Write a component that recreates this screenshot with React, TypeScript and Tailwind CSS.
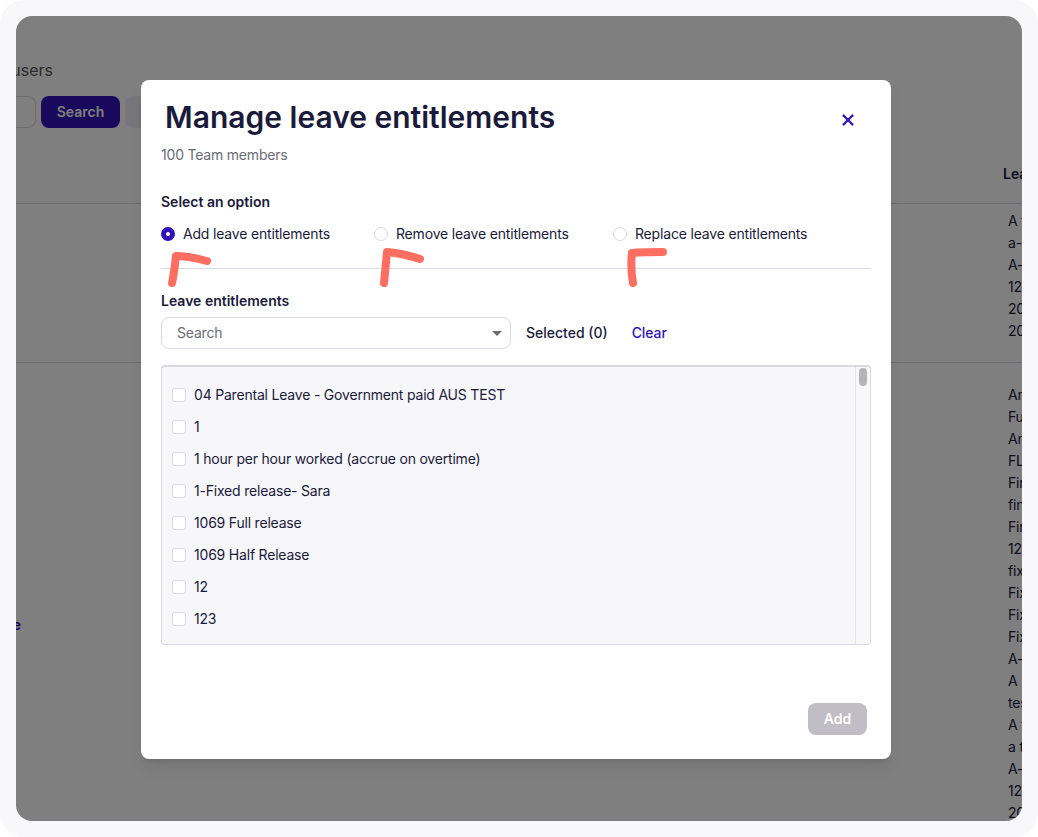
import { X } from 'lucide-react';

const options = ['Add leave entitlements', 'Remove leave entitlements', 'Replace leave entitlements'];

const entitlements = [
  '04 Parental Leave - Government paid AUS TEST',
  '1',
  '1 hour per hour worked (accrue on overtime)',
  '1-Fixed release- Sara',
  '1069 Full release',
  '1069 Half Release',
  '12',
  '123',
];

const firstRow = ['A test', 'a-1 leave', 'A-leave', '12 days', '2022', '2023'];
const secondRow = [
  'Annual', 'Full', 'Annual', 'FLT', 'First', 'final', 'First', '12 days', 'fixed', 'Fixed', 'Fixed', 'Fixed',
  'A-leave', 'A leave', 'test', 'A test', 'a test', 'A-leave', '12 days', '2022',
];

function Background() {
  return (
    <div className="flex flex-col text-sm text-[#1a1a3a]">
      <div className="mt-[42px] flex h-6 w-[37px] justify-end whitespace-nowrap text-base leading-6 text-[#555]">
        Search users
      </div>
      <div className="mt-[14px] flex h-8 gap-[5px]">
        <div className="w-5 rounded-r-lg border border-l-0 border-[#d9d9e3] bg-white" />
        <div className="flex w-[79px] items-center justify-center rounded-lg bg-[#3212b8] font-semibold text-white">
          Search
        </div>
        <div className="w-[120px] rounded-lg bg-[#eeeef6]" />
      </div>
      <div className="flex h-[76px] items-end border-b border-[#d9d9e3] pb-[19px] pl-[987px] font-semibold whitespace-nowrap">
        Leave entitlements
      </div>
      <div className="flex h-[159px] border-b border-[#d9d9e3] pt-[6px]">
        <div className="ml-[992px] flex flex-col tracking-[-0.2px] whitespace-nowrap leading-[22px]">
          {firstRow.map((label) => (
            <div key={label}>{label}</div>
          ))}
        </div>
      </div>
      <div className="flex">
        <div className="flex w-[5px] justify-end pt-[252px] font-semibold whitespace-nowrap text-[#3212b8]">
          Manage
        </div>
        <div className="ml-[987px] flex flex-col tracking-[-0.2px] whitespace-nowrap pt-[21px] leading-[22px]">
          {secondRow.map((label, i) => (
            <div key={i}>{label}</div>
          ))}
        </div>
      </div>
    </div>
  );
}

function Modal() {
  return (
    <div className="absolute top-16 left-[125px] flex h-[679px] w-[750px] flex-col rounded-lg bg-white px-5 text-sm text-[#1a1a3a] shadow-lg">
      <div className="mt-[17px] flex items-center justify-between pr-[14px] pl-1">
        <h1 className="text-3xl leading-10 font-semibold">Manage leave entitlements</h1>
        <X className="mt-[6px] h-[18px] w-[18px] text-[#3212b8]" strokeWidth={3} />
      </div>
      <p className="mt-[8px] leading-5 tracking-[-0.2px] text-[#6b6b76]">100 Team members</p>

      <p className="mt-[27px] leading-5 font-semibold">Select an option</p>
      <div className="mt-[12px] flex h-5 items-center tracking-[-0.18px]">
        {options.map((label, i) => (
          <label
            key={label}
            className={
              i === 0
                ? 'flex w-[213px] items-center gap-2'
                : i === 1
                  ? 'flex w-[239px] items-center gap-2'
                  : 'flex items-center gap-2'
            }
          >
            {i === 0 ? (
              <span className="h-[14px] w-[14px] rounded-full border-[5px] border-[#3212b8] bg-white" />
            ) : (
              <span className="h-[14px] w-[14px] rounded-full border border-[#d9d9e3] bg-white" />
            )}
            <span>{label}</span>
          </label>
        ))}
      </div>
      <div className="mt-[24px] border-t border-[#d9d9e3]" />

      <p className="mt-[22px] leading-5 font-semibold">Leave entitlements</p>
      <div className="mt-[6px] flex items-center">
        <div className="flex h-8 w-[350px] items-center justify-between rounded-lg border border-[#d9d9e3] pr-[8px] pl-[15px] tracking-[-0.2px] text-[#6b6b76]">
          <span>Search</span>
          <span className="h-0 w-0 border-x-[5px] border-t-[5px] border-x-transparent border-t-[#6b6b76]" />
        </div>
        <span className="ml-[15px] font-medium">Selected (0)</span>
        <span className="ml-6 font-medium tracking-[-0.1px] text-[#3212b8]">Clear</span>
      </div>

      <div className="relative mt-4 h-[280px] overflow-hidden rounded border border-t-2 border-[#d9d9e3] bg-[#f7f7fa]">
        <div className="flex flex-col pt-[12px] pl-[10px] tracking-[-0.2px]">
          {entitlements.map((label) => (
            <div key={label} className="flex h-8 items-center gap-2">
              <span className="h-[14px] w-[14px] rounded-[3px] border border-[#d9d9e3] bg-white" />
              <span>{label}</span>
            </div>
          ))}
        </div>
        <div className="absolute top-0 right-0 bottom-0 w-[15px] border-l border-[#e6e6e6] bg-[#f8f8f8] pt-px pl-[3px]">
          <div className="h-[18px] w-2 rounded bg-[#b5b5b5]" />
        </div>
      </div>

      <div className="mt-[58px] flex justify-end pr-1">
        <button className="h-8 w-[59px] rounded-lg bg-[#c0bdc4] font-semibold text-white">Add</button>
      </div>
    </div>
  );
}

export default function App() {
  return (
    <div className="relative h-[837px] w-full bg-white font-['Inter',sans-serif]">
      <div className="h-full rounded-3xl bg-[#f8f8fb] p-4">
        <div className="relative h-[805px] overflow-hidden rounded-2xl bg-white">
          <Background />
          <div className="absolute inset-0 bg-black/50" />
          <Modal />
        </div>
      </div>
      <svg className="pointer-events-none absolute inset-0" width="1038" height="837" fill="none" stroke="#ff6f61" strokeWidth="8" strokeLinecap="round" strokeLinejoin="round">
        <path d="M172 283C174 274 175 265 176 256C186 256 196 258 207 261" />
        <path d="M384 283C385 272 386 262 387 252C398 253 408 255 420 259" />
        <path d="M633 283C631 272 631 262 632 253C642 252 652 252 663 252" />
      </svg>
    </div>
  );
}
